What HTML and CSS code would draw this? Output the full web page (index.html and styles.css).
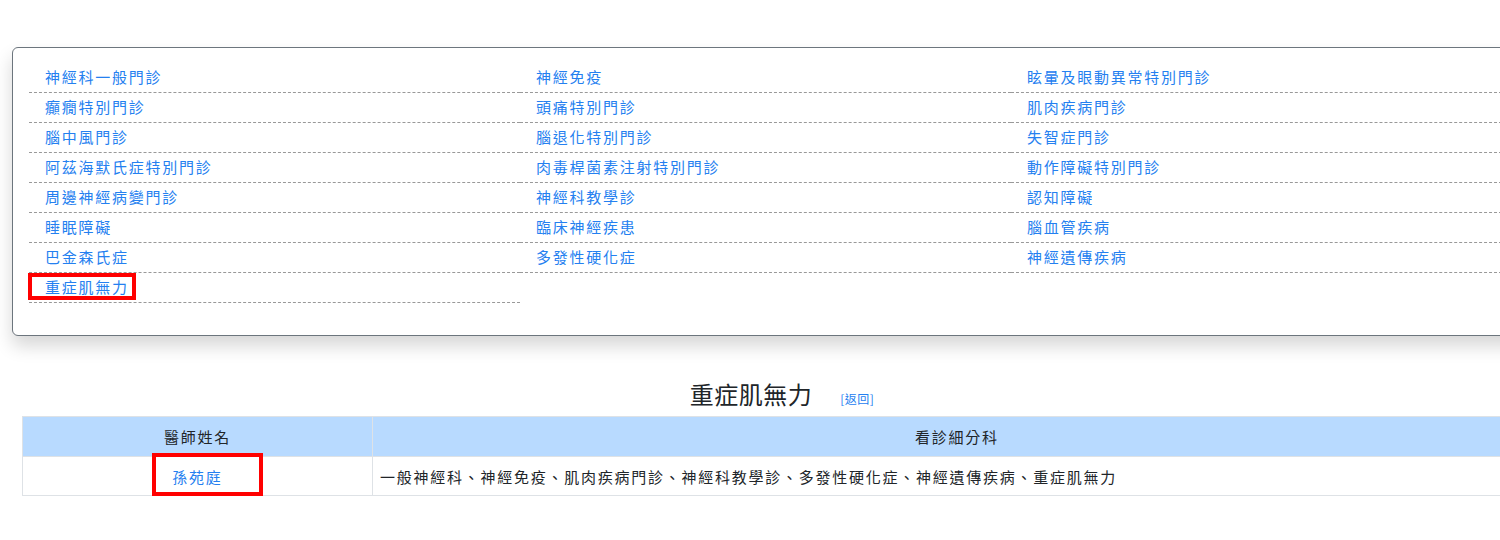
FILE: index.html
```html
<!DOCTYPE html>
<html lang="zh-Hant">
<head>
    <meta charset="UTF-8">
    <meta name="viewport" content="width=device-width, initial-scale=1.0">
    <title>神經科門診</title>
    <link rel="stylesheet" href="styles.css">
</head>
<body>
    <!-- Clinic list -->
    <div class="clinic-box">
        <ul class="clinic-list">
            <li><a href="#">神經科一般門診</a></li>
            <li><a href="#">神經免疫</a></li>
            <li><a href="#">眩暈及眼動異常特別門診</a></li>
            <li><a href="#">癲癇特別門診</a></li>
            <li><a href="#">頭痛特別門診</a></li>
            <li><a href="#">肌肉疾病門診</a></li>
            <li><a href="#">腦中風門診</a></li>
            <li><a href="#">腦退化特別門診</a></li>
            <li><a href="#">失智症門診</a></li>
            <li><a href="#">阿茲海默氏症特別門診</a></li>
            <li><a href="#">肉毒桿菌素注射特別門診</a></li>
            <li><a href="#">動作障礙特別門診</a></li>
            <li><a href="#">周邊神經病變門診</a></li>
            <li><a href="#">神經科教學診</a></li>
            <li><a href="#">認知障礙</a></li>
            <li><a href="#">睡眠障礙</a></li>
            <li><a href="#">臨床神經疾患</a></li>
            <li><a href="#">腦血管疾病</a></li>
            <li><a href="#">巴金森氏症</a></li>
            <li><a href="#">多發性硬化症</a></li>
            <li><a href="#">神經遺傳疾病</a></li>
            <li class="active"><a href="#">重症肌無力</a><span class="mark mark-item"></span></li>
        </ul>
    </div>

    <!-- Doctor table -->
    <div class="result">
        <h2 class="result-title">重症肌無力 <a href="#" class="back-link">[返回]</a></h2>
        <table class="doctor-table">
            <thead>
                <tr>
                    <th class="col-name">醫師姓名</th>
                    <th>看診細分科</th>
                </tr>
            </thead>
            <tbody>
                <tr>
                    <td class="col-name"><a href="#">孫苑庭</a><span class="mark mark-doctor"></span></td>
                    <td class="col-sub">一般神經科、神經免疫、肌肉疾病門診、神經科教學診、多發性硬化症、神經遺傳疾病、重症肌無力</td>
                </tr>
            </tbody>
        </table>
    </div>
</body>
</html>
```

FILE: styles.css
```css
html, body {
    overflow: hidden;
}

body {
    margin: 0;
    padding: 0;
    background-color: #fff;
    color: #212529;
    font-family: "Noto Sans CJK TC", "Liberation Sans", sans-serif;
    font-size: 15px;
    letter-spacing: 1.75px;
    width: 1560px;
}

a {
    color: #2480f0;
    text-decoration: none;
}

/* Clinic list box */
.clinic-box {
    margin: 47px 0 0 12px;
    width: 1520px;
    padding: 15px 16px 32px 16px;
    border: 1px solid #6c757d;
    border-radius: 6px;
    box-shadow: 0 10px 18px rgba(0, 0, 0, 0.16);
    background-color: #fff;
}

.clinic-list {
    list-style: none;
    margin: 0;
    padding: 0;
    display: grid;
    grid-template-columns: repeat(3, 491px);
}

.clinic-list li {
    position: relative;
    height: 29px;
    line-height: 28px;
    padding-left: 16px;
    border-bottom: 1px dashed #999;
}

/* red annotation boxes */
.mark {
    position: absolute;
    border: 4px solid #f00;
    pointer-events: none;
}

.mark-item {
    left: -1px;
    top: 0;
    width: 100px;
    height: 19px;
}

.mark-doctor {
    left: 129px;
    top: -4px;
    width: 103px;
    height: 35px;
}

/* Result section */
.result {
    margin: 43px 0 0 22px;
    width: 1520px;
}

.result-title {
    margin: 0 0 7px 0;
    height: 30px;
    text-align: center;
    font-size: 24px;
    font-weight: normal;
    line-height: 30px;
    letter-spacing: 0.5px;
}

.back-link {
    font-size: 12px;
    line-height: 12px;
    letter-spacing: 0.5px;
    margin-left: 22px;
}

.doctor-table {
    width: 100%;
    border-collapse: collapse;
}

.doctor-table th,
.doctor-table td {
    border: 1px solid #dee2e6;
    height: 38px;
    padding: 0 7px;
    font-weight: normal;
}

.doctor-table th {
    background-color: #b8daff;
    text-align: center;
    height: 39px;
}

.doctor-table .col-name {
    width: 335px;
    text-align: center;
    position: relative;
}

.doctor-table .col-sub {
    text-align: left;
}
```
